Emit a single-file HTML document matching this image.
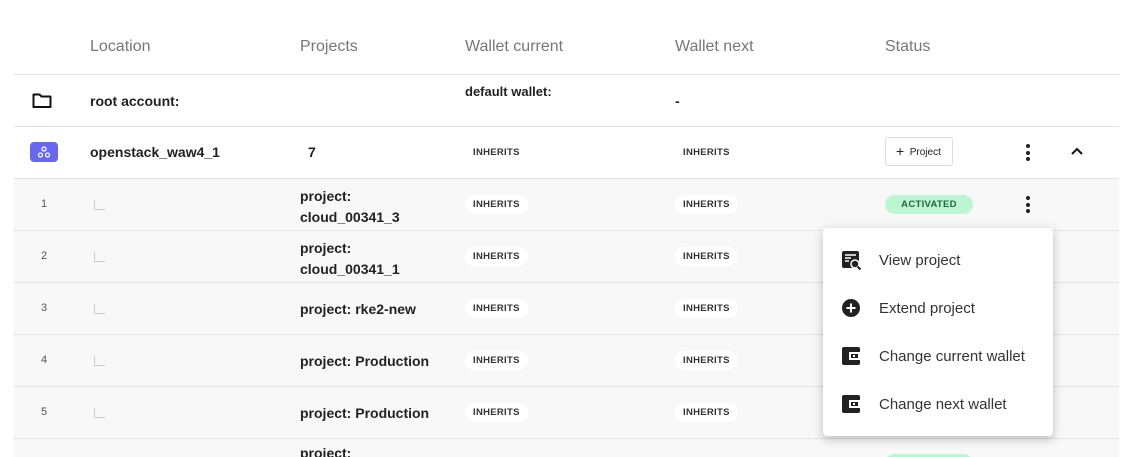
<!DOCTYPE html>
<html><head><style>
*{margin:0;padding:0;box-sizing:border-box}
html,body{width:1131px;height:457px;overflow:hidden}
body{background:#fff;font-family:"Liberation Sans",sans-serif;color:#222;position:relative}
.h{position:absolute;top:38px;font-size:16px;color:#777}
.row{position:absolute;left:14px;width:1105px;height:52px;border-bottom:1px solid #e2e2e2}
.g{background:#f8f8f8}
.t{position:absolute;font-size:14px;font-weight:bold;color:#222}
.pill{position:absolute;font-size:9.5px;font-weight:bold;padding:4px 8px;border-radius:10px;background:#fff;color:#333;letter-spacing:.3px}
.idx{position:absolute;left:26px;width:8px;text-align:center;font-size:11px;color:#555}
.corner{position:absolute;left:80px;top:21px;width:11px;height:10px;border-left:1px solid #ccc;border-bottom:1px solid #ccc}
.dots{position:absolute;width:4px}
.dots i{display:block;width:4px;height:4px;border-radius:2px;background:#222;margin-bottom:2.5px}
.act{position:absolute;left:871px;width:88px;height:19px;border-radius:10px;background:#bdf5d3;color:#1d6a3c;font-size:9.5px;font-weight:bold;text-align:center;line-height:19px;letter-spacing:.3px}
.menu{position:absolute;left:823px;top:228px;width:230px;height:208px;background:#fff;border-radius:4px;box-shadow:0 3px 10px rgba(0,0,0,.25)}
.mi{position:absolute;left:56px;font-size:15px;color:#333}
.ic{position:absolute;left:19px}
</style></head><body>
<div class="h" style="left:90px">Location</div>
<div class="h" style="left:300px">Projects</div>
<div class="h" style="left:465px">Wallet current</div>
<div class="h" style="left:675px">Wallet next</div>
<div class="h" style="left:885px">Status</div>

<div class="row" style="top:74px;height:53px;border-top:1px solid #e2e2e2">
<svg style="position:absolute;left:18px;top:17px" width="20" height="17" viewBox="0 0 20 17"><path d="M1.5 2.5h6l2 2h9v10.5h-17z" fill="none" stroke="#111" stroke-width="2" stroke-linejoin="round"/></svg>
<div class="t" style="left:76px;top:18px">root account:</div>
<div class="t" style="left:451px;top:9px;font-size:13px">default wallet:</div>
<div class="t" style="left:661px;top:18px">-</div>
</div>
<div class="row" style="top:127px">
<div style="position:absolute;left:16px;top:15px;width:28px;height:20px;border-radius:4px;background:#6a67ee"></div>
<svg style="position:absolute;left:16px;top:15px" width="28" height="20"><g fill="none" stroke="#fff" stroke-width="1.2"><circle cx="14" cy="7" r="2"/><circle cx="10.5" cy="13" r="2"/><circle cx="17.5" cy="13" r="2"/></g></svg>
<div class="t" style="left:76px;top:17px">openstack_waw4_1</div>
<div class="t" style="left:294px;top:17px">7</div>
<div class="pill" style="left:451px;top:16px;background:none">INHERITS</div>
<div class="pill" style="left:661px;top:16px;background:none">INHERITS</div>
<div style="position:absolute;left:871px;top:10px;width:68px;height:29px;border:1px solid #ddd;border-radius:3px;font-size:10px;line-height:27px;padding-left:10px"><span style="font-size:14px;vertical-align:-1px">+</span>&nbsp; Project</div>
<div class="dots" style="left:1012px;top:17px"><i></i><i></i><i></i></div>
<svg style="position:absolute;left:1056px;top:20px" width="14" height="10"><path d="M2 7l5-5 5 5" fill="none" stroke="#111" stroke-width="2"/></svg>
</div>

<div class="row g" style="top:179px"><div class="idx" style="top:19px">1</div><div class="corner"></div>
<div class="t" style="left:286px;top:7px;line-height:21px">project:<br>cloud_00341_3</div>
<div class="pill" style="left:451px;top:16px">INHERITS</div><div class="pill" style="left:661px;top:16px">INHERITS</div>
<div class="act" style="top:16px">ACTIVATED</div>
<div class="dots" style="left:1012px;top:17px"><i></i><i></i><i></i></div></div>
<div class="row g" style="top:231px"><div class="idx" style="top:19px">2</div><div class="corner"></div>
<div class="t" style="left:286px;top:7px;line-height:21px">project:<br>cloud_00341_1</div>
<div class="pill" style="left:451px;top:16px">INHERITS</div><div class="pill" style="left:661px;top:16px">INHERITS</div></div>
<div class="row g" style="top:283px"><div class="idx" style="top:19px">3</div><div class="corner"></div>
<div class="t" style="left:286px;top:18px">project: rke2-new</div>
<div class="pill" style="left:451px;top:16px">INHERITS</div><div class="pill" style="left:661px;top:16px">INHERITS</div></div>
<div class="row g" style="top:335px"><div class="idx" style="top:19px">4</div><div class="corner"></div>
<div class="t" style="left:286px;top:18px">project: Production</div>
<div class="pill" style="left:451px;top:16px">INHERITS</div><div class="pill" style="left:661px;top:16px">INHERITS</div></div>
<div class="row g" style="top:387px"><div class="idx" style="top:19px">5</div><div class="corner"></div>
<div class="t" style="left:286px;top:18px">project: Production</div>
<div class="pill" style="left:451px;top:16px">INHERITS</div><div class="pill" style="left:661px;top:16px">INHERITS</div></div>
<div class="row g" style="top:439px;height:18px;border-bottom:none"><div class="t" style="left:286px;top:6px">project:</div><div class="act" style="top:15px"></div></div>

<div class="menu">
<svg class="ic" style="top:23px" width="20" height="20" viewBox="0 0 20 20"><rect x="0" y="0" width="17" height="17" rx="2" fill="#222"/><path d="M3 4h11M3 7h6M3 10h4" stroke="#fff" stroke-width="1.5"/><circle cx="13" cy="13" r="4" fill="#222" stroke="#fff" stroke-width="1.5"/><path d="M15.5 15.5l3 3" stroke="#222" stroke-width="2"/></svg>
<div class="mi" style="top:24px">View project</div>
<svg class="ic" style="top:71px" width="20" height="20"><circle cx="9" cy="9" r="9" fill="#222"/><path d="M9 4.5v9M4.5 9h9" stroke="#fff" stroke-width="2"/></svg>
<div class="mi" style="top:72px">Extend project</div>
<svg class="ic" style="top:119px" width="20" height="20"><rect x="0" y="0" width="18" height="18" rx="2" fill="#222"/><rect x="7" y="5" width="11" height="8" fill="#fff"/><rect x="9" y="7" width="7" height="4" fill="#222"/><rect x="11" y="8" width="2" height="2" fill="#fff"/></svg>
<div class="mi" style="top:120px">Change current wallet</div>
<svg class="ic" style="top:167px" width="20" height="20"><rect x="0" y="0" width="18" height="18" rx="2" fill="#222"/><rect x="7" y="5" width="11" height="8" fill="#fff"/><rect x="9" y="7" width="7" height="4" fill="#222"/><rect x="11" y="8" width="2" height="2" fill="#fff"/></svg>
<div class="mi" style="top:168px">Change next wallet</div>
</div>
</body></html>
